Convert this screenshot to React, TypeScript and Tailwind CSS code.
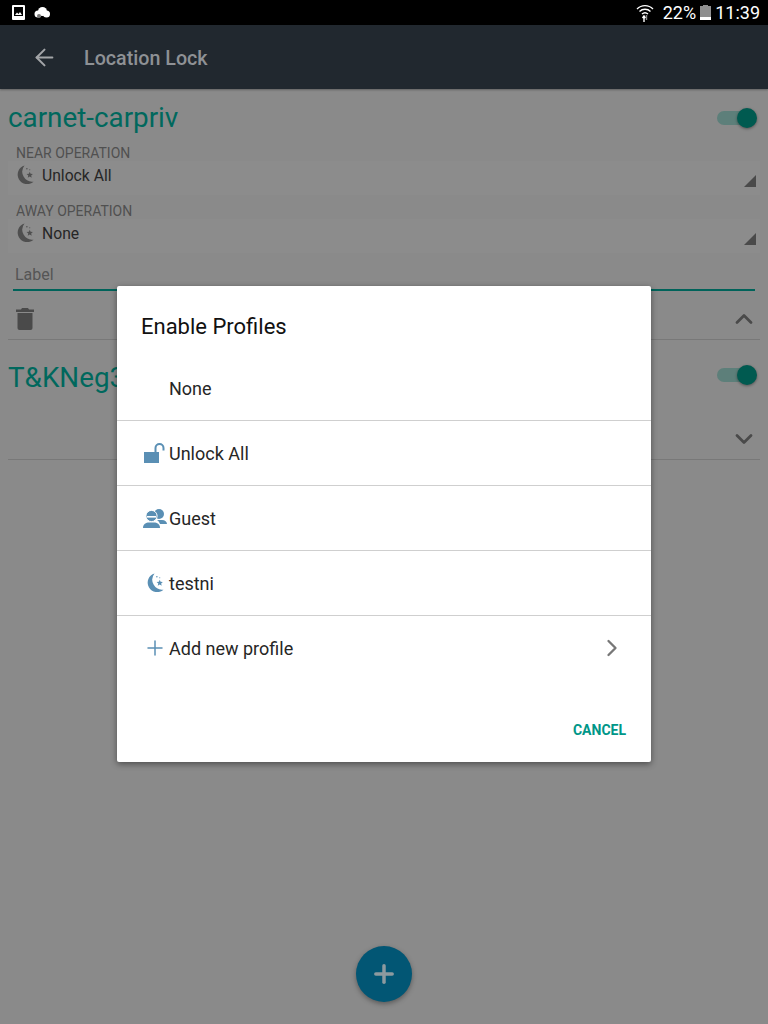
import { ArrowLeft, ChevronDown, ChevronRight, ChevronUp, Plus } from "lucide-react";

function MoonStar({ className }: { className?: string }) {
  return (
    <svg viewBox="0 0 19 20" className={className} fill="currentColor">
      <path d="M9 0 A10 10 0 1 0 18.5 17 A10.5 10.5 0 0 1 9 0 Z" />
      <path d="M14.5 6.5 L15.4 8.8 L17.8 9 L16 10.6 L16.6 12.9 L14.5 11.7 L12.4 12.9 L13 10.6 L11.2 9 L13.6 8.8 Z" />
      <circle cx="11.5" cy="3.5" r="0.8" />
      <circle cx="14.5" cy="4.5" r="0.6" />
    </svg>
  );
}

function GuestIcon({ className }: { className?: string }) {
  return (
    <svg viewBox="0 0 24 20" className={className} fill="currentColor">
      <circle cx="16" cy="6" r="5" />
      <path d="M14 12 H19 C22 12 24 14 24 16 H17 C16.5 14.5 15.5 13 14 12 Z" />
      <circle cx="8.5" cy="8" r="5.6" stroke="#ffffff" strokeWidth="1" />
      <rect x="4" y="8" width="9" height="1.6" fill="#ffffff" />
      <path d="M0 20 C0 16 3 14.5 6 14.5 H11 C14 14.5 17 16 17 20 Z" />
    </svg>
  );
}

function OpenLock({ className }: { className?: string }) {
  return (
    <svg viewBox="0 0 21 20" className={className} fill="none">
      <rect x="0" y="9" width="15" height="11" fill="currentColor" />
      <path d="M11.5 9 V5 A4 4 0 0 1 19.5 5 V7.5" stroke="currentColor" strokeWidth="2" />
    </svg>
  );
}

function TrashIcon({ className }: { className?: string }) {
  return (
    <svg viewBox="0 0 18 22" className={className} fill="currentColor">
      <path d="M6 0 H12 L13 1.5 H18 V4 H0 V1.5 H5 Z" />
      <path d="M1.5 5 H16.5 V20 A2 2 0 0 1 14.5 22 H3.5 A2 2 0 0 1 1.5 20 Z" />
    </svg>
  );
}

function Toggle() {
  return (
    <div className="relative h-[14px] w-[40px]">
      <div className="h-[14px] w-[34px] rounded-full bg-[#5d7f7a]" />
      <div className="absolute right-0 top-[-3px] h-5 w-5 rounded-full bg-[#005a50] shadow-[0_1px_3px_rgba(0,0,0,0.4)]" />
    </div>
  );
}

function Spinner({ label, value }: { label: string; value: string }) {
  return (
    <div className="mx-2 h-[58px]">
      <div className="pl-2 text-[14px] leading-[16px] text-[#505050]">{label}</div>
      <div className="relative flex h-[34px] items-start gap-[8px] bg-[#8c8c8c] pl-2 pt-[4px]">
        <MoonStar className="h-5 w-[18px] text-[#4f4f4f]" />
        <span className="pt-[1px] text-[15.7px] leading-[20px] text-[#262626]">{value}</span>
        <div className="absolute bottom-[8px] right-[4px] h-0 w-0 border-b-[12px] border-l-[12px] border-b-[#4a4a4a] border-l-transparent" />
      </div>
    </div>
  );
}

function ProfileRow({ icon, name }: { icon: React.ReactNode; name: string }) {
  return (
    <div className="flex h-[65px] items-center border-b border-[#cfcfcf] pl-[25px] pr-8">
      <div className="flex w-[27px] justify-center pr-[2px]">{icon}</div>
      <span className="flex-1 text-[18px] text-[#262626]">{name}</span>
    </div>
  );
}

export default function App() {
  return (
    <div className="relative h-[1024px] w-[768px] overflow-hidden bg-[#8a8a8a] font-['Roboto',sans-serif]">
      {/* Status bar */}
      <div className="flex h-[25px] items-center bg-black pl-3 pr-2 text-white">
        <svg viewBox="0 0 13 15" className="h-[15px] w-[13px]">
          <rect width="13" height="15" rx="1" fill="#ffffff" />
          <rect x="2" y="2" width="9" height="9" fill="#000000" />
          <path d="M3 10 L5 7.5 L6.5 9 L8 7 L10 10 Z" fill="#ffffff" />
        </svg>
        <svg viewBox="0 0 16 11" className="ml-[9px] h-[11px] w-[16px]" fill="#ffffff">
          <circle cx="4" cy="7" r="3.5" />
          <circle cx="8.5" cy="4.5" r="4.5" />
          <circle cx="12.5" cy="7" r="3.5" />
          <circle cx="5" cy="9" r="2" fill="#777777" />
        </svg>
        <div className="flex-1" />
        <svg viewBox="0 0 18 18" className="h-[18px] w-[18px]" fill="none" stroke="#ffffff" strokeWidth="1.4">
          <path d="M1 5 C5.5 0.5 12.5 0.5 17 5" />
          <path d="M3.5 7.5 C6.5 4.5 11.5 4.5 14.5 7.5" />
          <path d="M6 10 C7.8 8.4 10.2 8.4 12 10" />
          <path d="M8 12 L8 18 M6.5 14 L8 12 L9.5 14" />
          <path d="M10.5 11 L10.5 16" stroke="#888888" />
        </svg>
        <span className="ml-[9px] text-[18px] leading-[25px]">22%</span>
        <div className="relative ml-[4px] h-[15px] w-[11px]">
          <div className="absolute left-[3px] top-0 h-[1px] w-[5px] bg-[#8f8f8f]" />
          <div className="absolute bottom-0 top-[1px] w-[11px] bg-[#8f8f8f]" />
          <div className="absolute bottom-0 h-[3px] w-[11px] bg-white" />
        </div>
        <span className="ml-[4px] text-[18px] leading-[25px]">11:39</span>
      </div>

      {/* App bar */}
      <div className="flex h-[64px] items-center bg-[#21282f] pl-[31px] shadow-[0_1px_2px_rgba(0,0,0,0.3)]">
        <ArrowLeft className="h-[27px] w-[27px] text-[#a3a5a8]" strokeWidth={1.8} />
        <span className="ml-[26px] pt-[3px] text-[19.7px] font-medium text-[#8e9195]">Location Lock</span>
      </div>

      {/* Card one */}
      <div className="flex h-[56px] items-center justify-between pl-2 pr-[11px] pt-[2px]">
        <span className="text-[27.8px] text-[#00685d]">carnet-carpriv</span>
        <Toggle />
      </div>
      <Spinner label="NEAR OPERATION" value="Unlock All" />
      <Spinner label="AWAY OPERATION" value="None" />
      <div className="mx-[13px] h-[30px] border-b-2 border-[#00635a] pl-[2px] pt-[4px] text-[16px] leading-[20px] text-[#555555]">Label</div>
      <div className="mx-2 flex h-[49px] items-center justify-between border-b border-[#787878] pl-2 pr-[2px] pt-2">
        <TrashIcon className="h-[22px] w-[18px] text-[#4a4a4a]" />
        <ChevronUp className="h-[28px] w-[28px] text-[#4a4a4a]" strokeWidth={2.4} />
      </div>

      {/* Card two */}
      <div className="flex h-[70px] items-center justify-between pl-2 pr-[11px]">
        <span className="pt-[5px] text-[27.8px] text-[#00685d]">T&amp;KNeg3</span>
        <Toggle />
      </div>
      <div className="mx-2 flex h-[50px] items-center justify-end border-b border-[#787878] pr-[2px] pt-2">
        <ChevronDown className="h-[28px] w-[28px] text-[#4a4a4a]" strokeWidth={2.4} />
      </div>

      {/* Add button */}
      <div className="absolute left-[356px] top-[946px] flex h-[56px] w-[56px] items-center justify-center rounded-full bg-[#025674] shadow-[0_2px_5px_rgba(0,0,0,0.35)]">
        <Plus className="h-7 w-7 text-[#8d9a9f]" strokeWidth={3} />
      </div>

      {/* Dialog */}
      <div className="absolute left-[117px] top-[286px] h-[476px] w-[534px] rounded-[2px] bg-white shadow-[0_2px_6px_rgba(0,0,0,0.45)]">
        <div className="h-[70px] pl-6 pt-[27px] text-[22px] leading-[28px] text-[#111111]">Enable Profiles</div>
        <div className="flex h-[65px] items-center border-b border-[#cfcfcf] pl-[52px] text-[18px] text-[#262626]">None</div>
        <ProfileRow icon={<OpenLock className="h-5 w-[21px] text-[#5a8fb4]" />} name="Unlock All" />
        <ProfileRow icon={<GuestIcon className="h-5 w-6 text-[#5a8fb4]" />} name="Guest" />
        <ProfileRow icon={<MoonStar className="h-5 w-[18px] text-[#5a8fb4]" />} name="testni" />
        <div className="flex h-[65px] items-center pb-[1px] pl-[25px] pr-[25px]">
          <div className="flex w-[27px] justify-center pr-[2px]">
            <Plus className="h-[24px] w-[24px] text-[#5a8fb4]" strokeWidth={1.5} />
          </div>
          <span className="flex-1 text-[18px] text-[#262626]">Add new profile</span>
          <ChevronRight className="h-[28px] w-[28px] text-[#777777]" />
        </div>
        <div className="flex justify-end pr-[25px] pt-[39px]">
          <span className="text-[14px] font-bold leading-[20px] text-[#009688]">CANCEL</span>
        </div>
      </div>
    </div>
  );
}
